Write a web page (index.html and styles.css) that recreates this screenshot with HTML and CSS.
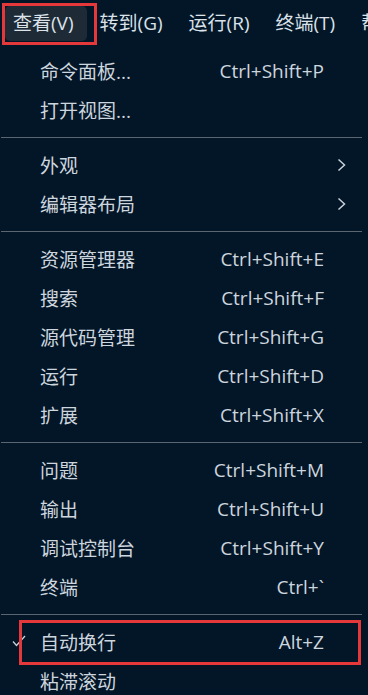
FILE: index.html
```html
<!DOCTYPE html>
<html lang="zh-CN">
<head>
  <meta charset="UTF-8">
  <meta name="viewport" content="width=device-width, initial-scale=1.0">
  <title>查看菜单</title>
  <link rel="stylesheet" href="styles.css">
</head>
<body>
  <header class="menubar">
    <span class="menubar_item active">查看(V)</span>
    <span class="menubar_item">转到(G)</span>
    <span class="menubar_item">运行(R)</span>
    <span class="menubar_item">终端(T)</span>
    <span class="menubar_item">帮</span>
  </header>

  <ul class="menu">
    <li class="menu_row"><span class="label">命令面板...</span><span class="keys">Ctrl+Shift+P</span></li>
    <li class="menu_row"><span class="label">打开视图...</span></li>
    <li class="sep"></li>
    <li class="menu_row"><span class="label">外观</span>
      <svg class="chevron" width="9" height="14" viewBox="0 0 9 14"><polyline points="1.5,1.5 7.5,7 1.5,12.5" fill="none" stroke="#c9d1da" stroke-width="1.5"/></svg>
    </li>
    <li class="menu_row"><span class="label">编辑器布局</span>
      <svg class="chevron" width="9" height="14" viewBox="0 0 9 14"><polyline points="1.5,1.5 7.5,7 1.5,12.5" fill="none" stroke="#c9d1da" stroke-width="1.5"/></svg>
    </li>
    <li class="sep"></li>
    <li class="menu_row"><span class="label">资源管理器</span><span class="keys">Ctrl+Shift+E</span></li>
    <li class="menu_row"><span class="label">搜索</span><span class="keys">Ctrl+Shift+F</span></li>
    <li class="menu_row"><span class="label">源代码管理</span><span class="keys">Ctrl+Shift+G</span></li>
    <li class="menu_row"><span class="label">运行</span><span class="keys">Ctrl+Shift+D</span></li>
    <li class="menu_row"><span class="label">扩展</span><span class="keys">Ctrl+Shift+X</span></li>
    <li class="sep"></li>
    <li class="menu_row"><span class="label">问题</span><span class="keys">Ctrl+Shift+M</span></li>
    <li class="menu_row"><span class="label">输出</span><span class="keys">Ctrl+Shift+U</span></li>
    <li class="menu_row"><span class="label">调试控制台</span><span class="keys">Ctrl+Shift+Y</span></li>
    <li class="menu_row"><span class="label">终端</span><span class="keys">Ctrl+`</span></li>
    <li class="sep"></li>
    <li class="menu_row marked">
      <svg class="check" width="14" height="12" viewBox="0 0 14 12"><polyline points="1,6.5 4.5,10.5 13,1" fill="none" stroke="#c9d1da" stroke-width="1.3"/></svg>
      <span class="label">自动换行</span><span class="keys">Alt+Z</span>
    </li>
    <li class="menu_row"><span class="label">粘滞滚动</span></li>
  </ul>
</body>
</html>
```

FILE: styles.css
```css
html, body {
  margin: 0;
  padding: 0;
  background-color: #021627;
  color: #cdd5de;
  font-family: "Open Sans", "Noto Sans CJK SC", sans-serif;
  font-size: 19px;
  overflow: hidden;
  height: 695px;
}

.menubar {
  display: flex;
  align-items: center;
  height: 46px;
  padding-left: 5px;
  white-space: nowrap;
  overflow: hidden;
}
.menubar_item {
  position: relative;
  padding: 0 13px;
  height: 35px;
  line-height: 35px;
  color: #dbe2ea;
}
.menubar_item.active {
  padding-left: 8px;
  background-color: #1e2a36;
  border-radius: 5px;
}
.menubar_item.active::after {
  content: '';
  position: absolute;
  left: -3px;
  right: -10px;
  top: -3px;
  bottom: -4px;
  border: 3px solid #e5383b;
}

.menu {
  list-style: none;
  margin: 0;
  padding: 5px 0 0 0;
  width: 362px;
}
.menu_row {
  position: relative;
  display: flex;
  align-items: center;
  height: 39px;
  padding: 0 38px 0 40px;
}
.label {
  flex: 1;
}
.keys {
  white-space: nowrap;
}
.chevron {
  position: relative;
  left: 22px;
}
.check {
  position: absolute;
  left: 12px;
  top: 13px;
}
.sep {
  height: 1px;
  margin: 8px 0 7px 1px;
  background-color: #5c6670;
}
.menu_row.marked::after {
  content: '';
  position: absolute;
  left: 19px;
  right: 1px;
  top: -2px;
  bottom: -4px;
  border: 3px solid #e5383b;
}
```
